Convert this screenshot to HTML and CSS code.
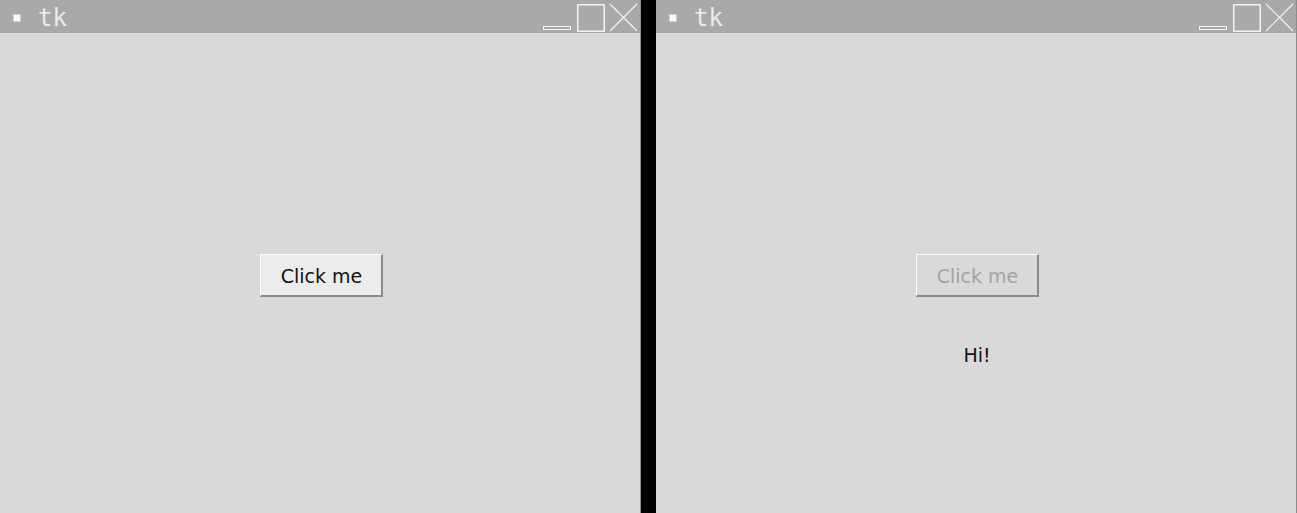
FILE: index.html
```html
<!DOCTYPE html>
<html>
<head>
<meta charset="utf-8">
<link rel="stylesheet" href="styles.css">
</head>
<body>
<div class="desktop">
  <div class="window">
    <div class="titlebar">
      <span class="app-icon"></span>
      <span class="title">tk</span>
      <svg class="controls" width="96" height="33" viewBox="0 0 96 33">
        <rect x="1.5" y="26.5" width="27" height="3" fill="none" stroke="#f4f4f4" stroke-width="1"/>
        <rect x="35.75" y="4.75" width="26.5" height="26.5" fill="none" stroke="#f4f4f4" stroke-width="1.5"/>
        <path d="M68 4 L95 31 M95 4 L68 31" stroke="#f4f4f4" stroke-width="1.2" fill="none"/>
      </svg>
    </div>
    <div class="content">
      <button class="btn btn-active">Click me</button>
    </div>
  </div>
  <div class="window">
    <div class="titlebar">
      <span class="app-icon"></span>
      <span class="title">tk</span>
      <svg class="controls" width="96" height="33" viewBox="0 0 96 33">
        <rect x="1.5" y="26.5" width="27" height="3" fill="none" stroke="#f4f4f4" stroke-width="1"/>
        <rect x="35.75" y="4.75" width="26.5" height="26.5" fill="none" stroke="#f4f4f4" stroke-width="1.5"/>
        <path d="M68 4 L95 31 M95 4 L68 31" stroke="#f4f4f4" stroke-width="1.2" fill="none"/>
      </svg>
    </div>
    <div class="content">
      <button class="btn btn-disabled" disabled>Click me</button>
      <div class="label">Hi!</div>
    </div>
  </div>
</div>
</body>
</html>
```

FILE: styles.css
```css
html, body {
  margin: 0;
  padding: 0;
  background: #000;
  width: 1297px;
  height: 513px;
  overflow: hidden;
}

.desktop {
  display: flex;
  gap: 15px;
  height: 513px;
}

.window {
  flex: 0 0 641px;
  box-sizing: border-box;
  display: flex;
  flex-direction: column;
  background: #d9d9d9;
  border-right: 1px solid #8c8c8c;
}

.titlebar {
  height: 33px;
  flex: 0 0 33px;
  background: #a9a9a9;
  display: flex;
  align-items: center;
  padding-left: 13px;
  padding-right: 2px;
  box-sizing: border-box;
}

.app-icon {
  width: 8px;
  height: 8px;
  background: #fafafa;
  border: 1px solid #d0d0d0;
  box-sizing: border-box;
  margin-right: 17px;
  margin-top: 2px;
}

.title {
  font-family: "DejaVu Sans Mono", monospace;
  font-size: 24px;
  line-height: 33px;
  color: #ececec;
  margin-top: 3px;
}

.controls {
  margin-left: auto;
  display: block;
}

.content {
  flex: 1;
  display: flex;
  flex-direction: column;
  align-items: center;
  padding-top: 221px;
  padding-left: 2px;
}

.btn {
  width: 123px;
  height: 43px;
  box-sizing: border-box;
  font-family: "DejaVu Sans", sans-serif;
  font-size: 19px;
  line-height: 22px;
  padding: 1px 0 0 2px;
  border: 2px solid;
  border-color: #fdfdfd #8a8a8a #8a8a8a #fdfdfd;
  border-width: 1px 2px 2px 1px;
  color: #111;
}

.btn-active {
  background: #ececec;
}

.btn-disabled {
  background: #d9d9d9;
  color: #a3a3a3;
}

.label {
  margin-top: 47px;
  font-family: "DejaVu Sans", sans-serif;
  font-size: 19px;
  line-height: 22px;
  color: #111;
}
```
